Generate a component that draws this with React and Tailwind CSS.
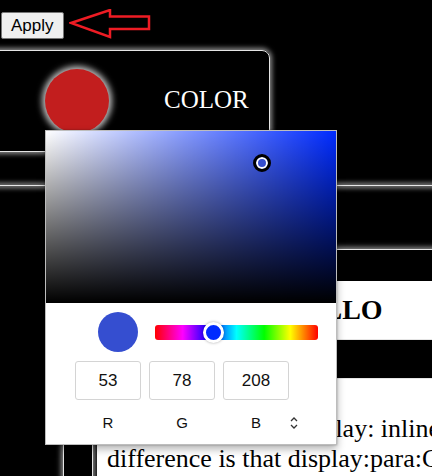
import React from 'react'

const glow = 'border border-[#e5e5e5] shadow-[0_0_5px_2px_rgba(255,255,255,0.55)]'

function ArrowLeft() {
  return (
    <svg width="82" height="32" viewBox="0 0 82 32" className="ml-[5px]">
      <polygon
        points="2,14 41,1 41,7.5 80,7.5 80,20 41,20 41,28"
        fill="none"
        stroke="#ee1c24"
        strokeWidth="2.5"
        strokeLinejoin="miter"
      />
    </svg>
  )
}

function Toggle() {
  return (
    <svg width="8" height="14" viewBox="0 0 8 14">
      <path d="M1 5 L4 2 L7 5" fill="none" stroke="#333" strokeWidth="1.3" />
      <path d="M1 9 L4 12 L7 9" fill="none" stroke="#333" strokeWidth="1.3" />
    </svg>
  )
}

function Picker() {
  const rgb = [53, 78, 208]
  return (
    <div className="absolute left-[45px] top-[130px] w-[292px] h-[315px] bg-white border border-[#bdbdbd] shadow-[0_0_2px_rgba(0,0,0,0.3),0_4px_8px_rgba(0,0,0,0.3)] font-['Liberation_Sans',Arial,sans-serif]">
      <div className="relative h-[172px] bg-[#002bff]">
        <div className="absolute inset-0 bg-gradient-to-r from-white to-transparent" />
        <div className="absolute inset-0 bg-gradient-to-t from-black to-transparent" />
        <div className="absolute left-[207px] top-[23px] w-[18px] h-[18px] rounded-full border-[3px] border-black bg-[#354ed0] shadow-[inset_0_0_0_2px_#fff]" />
      </div>
      <div className="flex items-center pl-[52px] pr-[18px] pt-[9px]">
        <div className="w-[40px] h-[40px] rounded-full bg-[#354ed0]" />
        <div className="relative ml-[17px] flex-1 h-[15px] rounded-[3px] bg-[linear-gradient(to_right,#f00_0%,#f0f_17%,#00f_33%,#0ff_50%,#0f0_67%,#ff0_83%,#f00_100%)]">
          <div className="absolute left-[48px] top-[-3px] w-[21px] h-[21px] rounded-full bg-[#002bff] border-[3px] border-white shadow-[0_0_3px_rgba(0,0,0,0.35)]" />
        </div>
      </div>
      <div className="flex pl-[29px] pt-[9px] gap-[8px]">
        {rgb.map((v, i) => (
          <div key={i} className="flex flex-col items-center w-[66px]">
            <div className="w-[66px] h-[39px] border border-[#d4d4d4] rounded-[3px] flex items-center justify-center text-[17px] text-[#111]">
              {v}
            </div>
            <div className="mt-[14px] text-[15px] leading-[17px] text-[#111]">{['R', 'G', 'B'][i]}</div>
          </div>
        ))}
        <div className="-ml-[7px] mt-[55px] h-[14px]">
          <Toggle />
        </div>
      </div>
    </div>
  )
}

export default function App() {
  return (
    <div className="relative min-h-screen h-[476px] bg-black overflow-hidden font-['Liberation_Serif','Times_New_Roman',serif]">
      <div className="flex items-start h-[39px] pt-[12px] pl-[1px]">
        <button className="h-[27px] px-[9px] bg-[#efefef] border border-[#767676] rounded-[2px] text-[17px] leading-none text-black font-['Liberation_Sans',Arial,sans-serif]">
          Apply
        </button>
        <div className="-mt-[3px]">
          <ArrowLeft />
        </div>
      </div>

      <div className={`mt-[11px] -ml-[10px] w-[280px] h-[102px] rounded-tr-lg flex items-center ${glow}`}>
        <div className="ml-[54px] shrink-0 w-[64px] h-[64px] rounded-full bg-[#c21e1e] shadow-[0_0_6px_3px_rgba(255,255,255,0.75)]" />
        <div className="ml-[55px] -mt-[4px] text-[25px] text-white leading-none">COLOR</div>
      </div>

      <div className="mt-[33px] -mx-[10px] h-0 border-t border-[#e5e5e5] shadow-[0_0_5px_2px_rgba(255,255,255,0.55)]" />

      <div className="flex mt-[63px]">
        <div className={`ml-[63px] mt-[195px] shrink-0 w-[30px] h-[100px] bg-black ${glow}`} />
        <div className="ml-[4px] min-w-0 flex-1 flex flex-col -mr-[10px]">
          <div className={`h-[32px] ${glow} border-b-0`} />
          <div className="h-[58px] bg-white flex items-center pl-[186px] text-[28px] font-bold text-black">
            HELLO
          </div>
          <div className={`h-[40px] bg-black ${glow}`} />
          <div className="bg-white pl-[10px] pt-[35px] pb-[40px] text-[26px] leading-[30px] text-black whitespace-nowrap overflow-hidden">
            <div>The difference to display: inline-block</div>
            <div>difference is that display:para:Changes</div>
          </div>
        </div>
      </div>

      <Picker />
    </div>
  )
}
